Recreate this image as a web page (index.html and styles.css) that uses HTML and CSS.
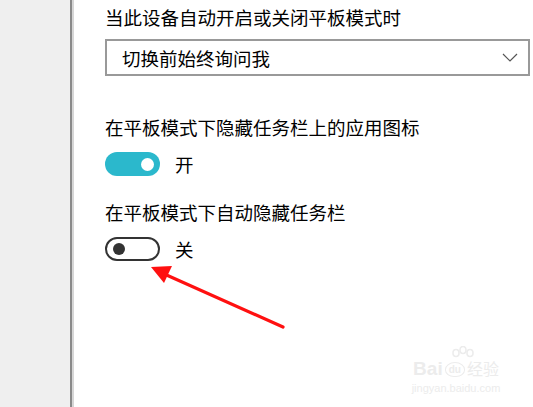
FILE: index.html
```html
<!DOCTYPE html>
<html lang="zh-CN">
<head>
<meta charset="utf-8">
<link rel="stylesheet" href="styles.css">
</head>
<body>
<div class="page">
  <aside class="sidebar"></aside>
  <main class="content">
    <div class="label first">当此设备自动开启或关闭平板模式时</div>
    <div class="select">
      <span class="select-text">切换前始终询问我</span>
      <svg class="chev" width="16" height="10" viewBox="0 0 16 10"><path d="M1 1 L8 8 L15 1" fill="none" stroke="#555" stroke-width="1.2"/></svg>
    </div>
    <div class="label l2">在平板模式下隐藏任务栏上的应用图标</div>
    <div class="toggle-row">
      <span class="toggle on"><span class="knob"></span></span>
      <span class="state">开</span>
    </div>
    <div class="label l3">在平板模式下自动隐藏任务栏</div>
    <div class="toggle-row">
      <span class="toggle off"><span class="knob"></span></span>
      <span class="state">关</span>
    </div>
  </main>
  <svg class="arrow" width="533" height="407" viewBox="0 0 533 407">
    <line x1="283" y1="327" x2="162" y2="273" stroke="#ff1010" stroke-width="3.2" stroke-linecap="round"/>
    <polygon points="151,267 172,266 164,283" fill="#ff1010"/>
  </svg>
  <div class="watermark">
    <svg class="wm-pawicon" width="30" height="18" viewBox="0 0 30 18">
      <g fill="none" stroke="#ececec" stroke-width="1.6">
        <ellipse cx="8" cy="7" rx="3" ry="3.5"/>
        <ellipse cx="15" cy="4" rx="3" ry="3.5"/>
        <ellipse cx="22" cy="7" rx="3" ry="3.5"/>
      </g>
    </svg>
    <div class="wm-top"><span class="wm-bai">Bai</span><span class="wm-paw">du</span><span class="wm-jy">经验</span></div>
    <div class="wm-url">jingyan.baidu.com</div>
  </div>
</div>
</body>
</html>
```
FILE: styles.css
```css
html, body {
  margin: 0;
  padding: 0;
  background: #ffffff;
}
body {
  font-family: "Noto Sans CJK SC", "Microsoft YaHei", sans-serif;
  color: #000;
}
.page {
  position: relative;
  display: flex;
  width: 533px;
  height: 407px;
  overflow: hidden;
}
.sidebar {
  width: 70px;
  flex: none;
  background: #efefef;
  border-right: 2px solid #8a8a8a;
  box-shadow: 2px 0 0 #d6d6d6;
}
.content {
  flex: 1;
  padding-left: 33px;
  padding-top: 4px;
}
.label {
  font-size: 18.5px;
  line-height: 26px;
  white-space: nowrap;
}
.select {
  box-sizing: border-box;
  margin-top: 9px;
  width: 425px;
  height: 37px;
  border: 2px solid #999999;
  display: flex;
  align-items: center;
  justify-content: space-between;
  padding: 0 10px 0 15px;
}
.select-text {
  font-size: 18.5px;
  line-height: 26px;
}
.chev {
  display: block;
  margin-top: 1px;
}
.l2 {
  margin-top: 38px;
}
.l3 {
  margin-top: 22px;
}
.toggle-row {
  display: flex;
  align-items: center;
  margin-top: 11px;
  height: 26px;
}
.toggle {
  position: relative;
  width: 55px;
  height: 24px;
  border-radius: 12px;
  box-sizing: border-box;
  display: block;
  flex: none;
}
.toggle.on {
  background: #2bb8cc;
}
.toggle.off {
  border: 2.5px solid #333;
  background: #fff;
}
.knob {
  position: absolute;
  width: 13px;
  height: 13px;
  border-radius: 50%;
  top: 50%;
  margin-top: -6.5px;
}
.on .knob {
  background: #fff;
  right: 6px;
}
.off .knob {
  background: #333;
  left: 6px;
  width: 12px;
  height: 12px;
  margin-top: -6px;
}
.state {
  font-size: 18.5px;
  line-height: 26px;
  margin-left: 15px;
}
.arrow {
  position: absolute;
  left: 0;
  top: 0;
  pointer-events: none;
}
.watermark {
  position: absolute;
  left: 408px;
  top: 348px;
  width: 96px;
  color: #ececec;
  font-family: "Liberation Sans", sans-serif;
  text-align: center;
}
.wm-pawicon {
  position: absolute;
  left: 40px;
  top: -2px;
}
.wm-top {
  margin-top: 10px;
  font-size: 19px;
  font-weight: bold;
  line-height: 20px;
  white-space: nowrap;
}
.wm-paw {
  display: inline-block;
  font-size: 10px;
  border: 1.6px solid #ececec;
  border-radius: 50% 50% 45% 45%;
  padding: 1px 3px;
  margin: 0 2px;
  line-height: 11px;
  vertical-align: middle;
}
.wm-jy {
  font-family: "Noto Sans CJK SC", sans-serif;
  font-size: 16px;
  font-weight: normal;
}
.wm-url {
  font-size: 11px;
  line-height: 13px;
  margin-top: 3px;
  white-space: nowrap;
}
```
